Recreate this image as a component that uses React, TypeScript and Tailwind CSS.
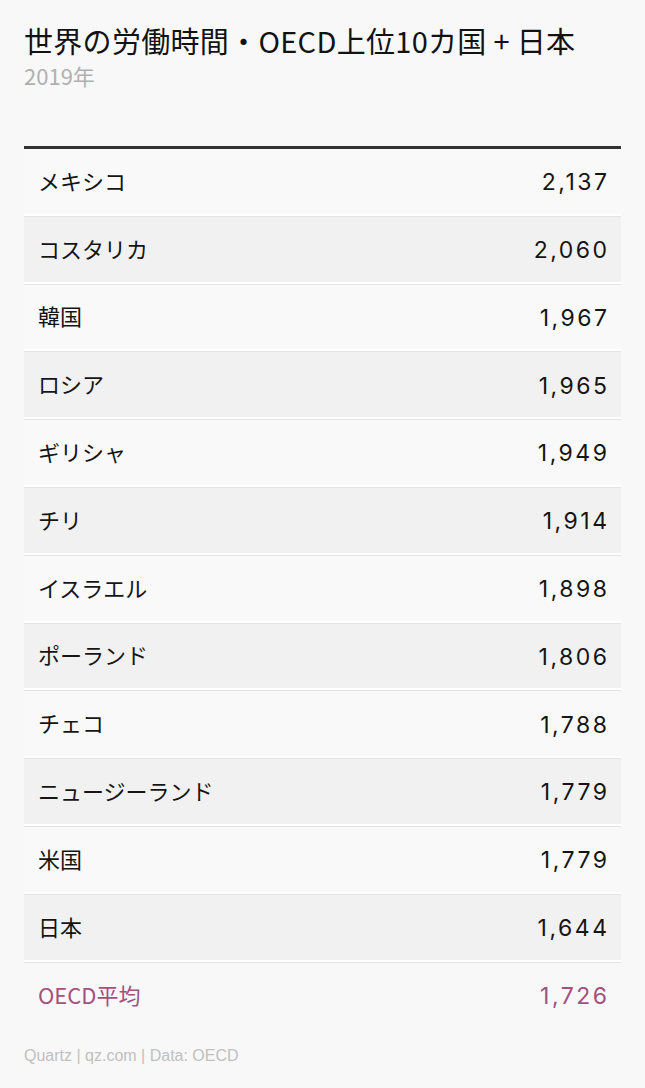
const rows: Array<{ name: string; value: string }> = [
  { name: "メキシコ", value: "2,137" },
  { name: "コスタリカ", value: "2,060" },
  { name: "韓国", value: "1,967" },
  { name: "ロシア", value: "1,965" },
  { name: "ギリシャ", value: "1,949" },
  { name: "チリ", value: "1,914" },
  { name: "イスラエル", value: "1,898" },
  { name: "ポーランド", value: "1,806" },
  { name: "チェコ", value: "1,788" },
  { name: "ニュージーランド", value: "1,779" },
  { name: "米国", value: "1,779" },
  { name: "日本", value: "1,644" },
];

const jp = "font-['Noto_Sans_CJK_JP',sans-serif]";
const num = "font-['Inter','Noto_Sans_CJK_JP',sans-serif] text-[23px] tracking-[2.5px] -mr-[2.5px]";

export default function App() {
  return (
    <div className="min-h-[1088px] bg-[#f8f8f8] px-6 pt-[20px]">
      <h1 className={`${jp} text-[29px] leading-[40px] tracking-[0.3px] text-[#121212]`}>
        世界の労働時間・OECD上位10カ国 + 日本
      </h1>
      <p className={`${jp} mt-[1px] text-[22px] leading-[28px] text-[#b0b0b0]`}>
        2019年
      </p>

      <div className="mt-[57px] border-t-[3px] border-[#333333]">
        {rows.map((row, i) => (
          <div
            key={row.name}
            className={`flex h-[67.8px] items-center justify-between border-b border-[#e4e4e4] px-[14px] shadow-[inset_0_-2px_0_#ffffff] ${
              i % 2 === 1 ? "bg-[#f1f1f1]" : "bg-[#f9f9f9]"
            }`}
          >
            <span className={`${jp} mb-[4px] text-[22px] text-[#151515]`}>{row.name}</span>
            <span className={`${num} text-[#151515]`}>{row.value}</span>
          </div>
        ))}
        <div className="flex h-[67px] items-center justify-between px-[14px] text-[#a4507f]">
          <span className={`${jp} mb-[4px] text-[22px]`}>OECD平均</span>
          <span className={num}>1,726</span>
        </div>
      </div>

      <p className="mt-[14px] font-['Liberation_Sans',sans-serif] text-[16px] text-[#c0c0c0]">
        Quartz | qz.com | Data: OECD
      </p>
    </div>
  );
}
